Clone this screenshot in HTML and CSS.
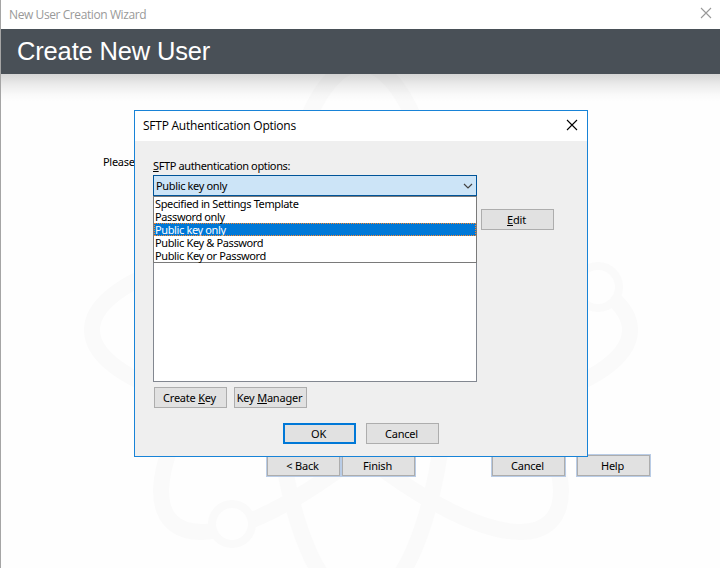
FILE: index.html
```html
<!DOCTYPE html>
<html lang="en">
<head>
<meta charset="utf-8">
<title>New User Creation Wizard</title>
<link rel="stylesheet" href="styles.css">
</head>
<body>
<div class="wizard">
  <header class="wizard-title">
    <span class="wizard-name">New User Creation Wizard</span>
    <svg class="close" width="12" height="12" viewBox="0 0 12 12"><path d="M1 1L11 11M11 1L1 11"/></svg>
  </header>
  <h1 class="banner"><span>Create New User</span></h1>
  <main class="page">
    <svg class="watermark" width="719" height="494" viewBox="1 74 719 494">
      <g class="orbits">
        <ellipse cx="361" cy="330" rx="269" ry="90"/>
        <ellipse cx="361" cy="334" rx="88" ry="270"/>
        <ellipse cx="361" cy="332" rx="268" ry="90" transform="rotate(45 361 332)"/>
        <ellipse cx="361" cy="332" rx="268" ry="90" transform="rotate(-45 361 332)"/>
      </g>
      <g class="electrons">
        <circle cx="598" cy="287" r="21"/>
        <circle cx="232" cy="524" r="20"/>
      </g>
    </svg>
    <div class="shade"></div>
    <p class="prompt">Please</p>
    <nav class="wizard-buttons">
      <button class="btn halo">&lt; Back</button>
      <button class="btn halo finish">Finish</button>
      <button class="btn halo cancel">Cancel</button>
      <button class="btn halo help">Help</button>
    </nav>
  </main>
</div>

<section class="dialog">
  <header class="dialog-title">
    <span class="dialog-name">SFTP Authentication Options</span>
    <svg class="close dark" width="12" height="12" viewBox="0 0 12 12"><path d="M1 1L11 11M11 1L1 11"/></svg>
  </header>
  <div class="dialog-body">
    <label class="label"><span class="key">S</span>FTP authentication options:</label>
    <div class="fields">
      <div class="selector">
        <div class="combo"><span>Public key only</span>
          <svg width="10" height="6" viewBox="0 0 10 6"><path d="M1 1L5 5L9 1"/></svg>
        </div>
        <div class="listbox"></div>
        <ul class="menu">
          <li>Specified in Settings Template</li>
          <li>Password only</li>
          <li class="selected">Public key only</li>
          <li>Public Key &amp; Password</li>
          <li>Public Key or Password</li>
        </ul>
      </div>
      <button class="btn edit"><span class="key">E</span>dit</button>
    </div>
    <div class="key-buttons">
      <button class="btn">Create <span class="key">K</span>ey</button>
      <button class="btn">Key <span class="key">M</span>anager</button>
    </div>
    <div class="actions">
      <button class="btn default">OK</button>
      <button class="btn">Cancel</button>
    </div>
  </div>
</section>
</body>
</html>
```
FILE: styles.css
```css
* { box-sizing: border-box; }

body {
  margin: 0;
  width: 720px;
  height: 568px;
  overflow: hidden;
  position: relative;
  background: #fff;
  color: #000;
  font: 11px/13px "Noto Sans", "Open Sans", sans-serif;
  letter-spacing: -0.37px;
  white-space: nowrap;
}

.wizard {
  height: 568px;
  border-left: 1px solid #a5a5a5;
  display: flex;
  flex-direction: column;
}

.wizard-title {
  height: 29px;
  padding: 0 8px;
  display: flex;
  justify-content: space-between;
  align-items: center;
  color: #999;
  font: 12px/16px "Open Sans", sans-serif;
  letter-spacing: -0.41px;
}

.wizard-title .close { margin: 0 0 3px; }

.close { fill: none; stroke: #999; stroke-width: 1.1; }
.close.dark { stroke: #000; }

.banner {
  height: 45px;
  margin: 0;
  padding-left: 16px;
  background: #495057;
  color: #fff;
  font: 25.5px/45px "Liberation Sans", Arial, sans-serif;
  letter-spacing: -0.16px;
}

.page {
  flex: 1;
  position: relative;
  background: #fefefe;
}

.watermark { position: absolute; inset: 0; }
.orbits { fill: none; stroke: #fafafa; stroke-width: 16; }
.electrons { fill: #fefefe; stroke: #fafafa; stroke-width: 8; }

.shade {
  position: absolute;
  inset: 0 0 auto;
  height: 28px;
  background: linear-gradient(rgba(0,0,0,.16), rgba(0,0,0,.07) 40%, rgba(0,0,0,.015) 75%, transparent);
}

.prompt {
  position: relative;
  margin: 0;
  padding: 81px 0 0 102px;
  letter-spacing: -0.3px;
}

.wizard-buttons {
  position: relative;
  display: flex;
  margin: 287px 0 0 266px;
}

.btn {
  width: 73px;
  height: 21px;
  padding: 0 2px 0 0;
  border: 1px solid #adadad;
  border-radius: 0;
  background: #e1e1e1;
  color: #000;
  font: inherit;
  line-height: 19px;
  letter-spacing: -0.22px;
  text-align: center;
}

.halo { box-shadow: 0 0 0 1px #b9cce6; }
.finish { margin-left: 2px; }
.cancel { margin-left: 77px; }
.help { margin-left: 12px; }

.dialog {
  position: absolute;
  left: 134px;
  top: 110px;
  width: 454px;
  height: 347px;
  border: 1px solid #1883d7;
  background: #efefef;
}

.dialog-title {
  height: 30px;
  padding: 0 9px 0 8px;
  display: flex;
  align-items: center;
  justify-content: space-between;
  background: #fff;
  font: 12px/16px "Open Sans", sans-serif;
  letter-spacing: -0.24px;
}

.dialog-title .close { margin-bottom: 2px; }

.dialog-body { padding: 18px 0 0 18px; }

.label { display: block; height: 16px; }

.key { text-decoration: underline; text-underline-offset: 1px; }

.fields { display: flex; }

.selector { position: relative; width: 324px; }

.combo {
  height: 21px;
  padding: 0 3px 0 2px;
  display: flex;
  align-items: center;
  justify-content: space-between;
  border: 1px solid #005499;
  background: #cce4f7;
  letter-spacing: -0.35px;
}

.combo svg { fill: none; stroke: #444; stroke-width: 1.2; }

.listbox {
  height: 186px;
  border: 1px solid #828790;
  background: #fff;
}

.menu {
  position: absolute;
  top: 21px;
  left: 0;
  width: 324px;
  margin: 0;
  padding: 0;
  list-style: none;
  border: 1px solid #7a7a7a;
  background: #fff;
}

/* Rows are shorter than the glyph box, so plain rows paint above the highlight. */
.menu li {
  position: relative;
  z-index: 1;
  height: 13px;
  padding-left: 1px;
  line-height: 13px;
}

.menu .selected {
  z-index: 0;
  background: #0078d7;
  color: #fff;
  outline: 1px dotted #ff8728;
  outline-offset: -1px;
}

.edit { margin: 34px 0 0 4px; }

.key-buttons {
  display: flex;
  gap: 7px;
  margin: 5px 0 0 1px;
}

.actions {
  display: flex;
  gap: 10px;
  margin: 15px 0 0 130px;
}

.default { border: 2px solid #0078d7; line-height: 17px; }
```
